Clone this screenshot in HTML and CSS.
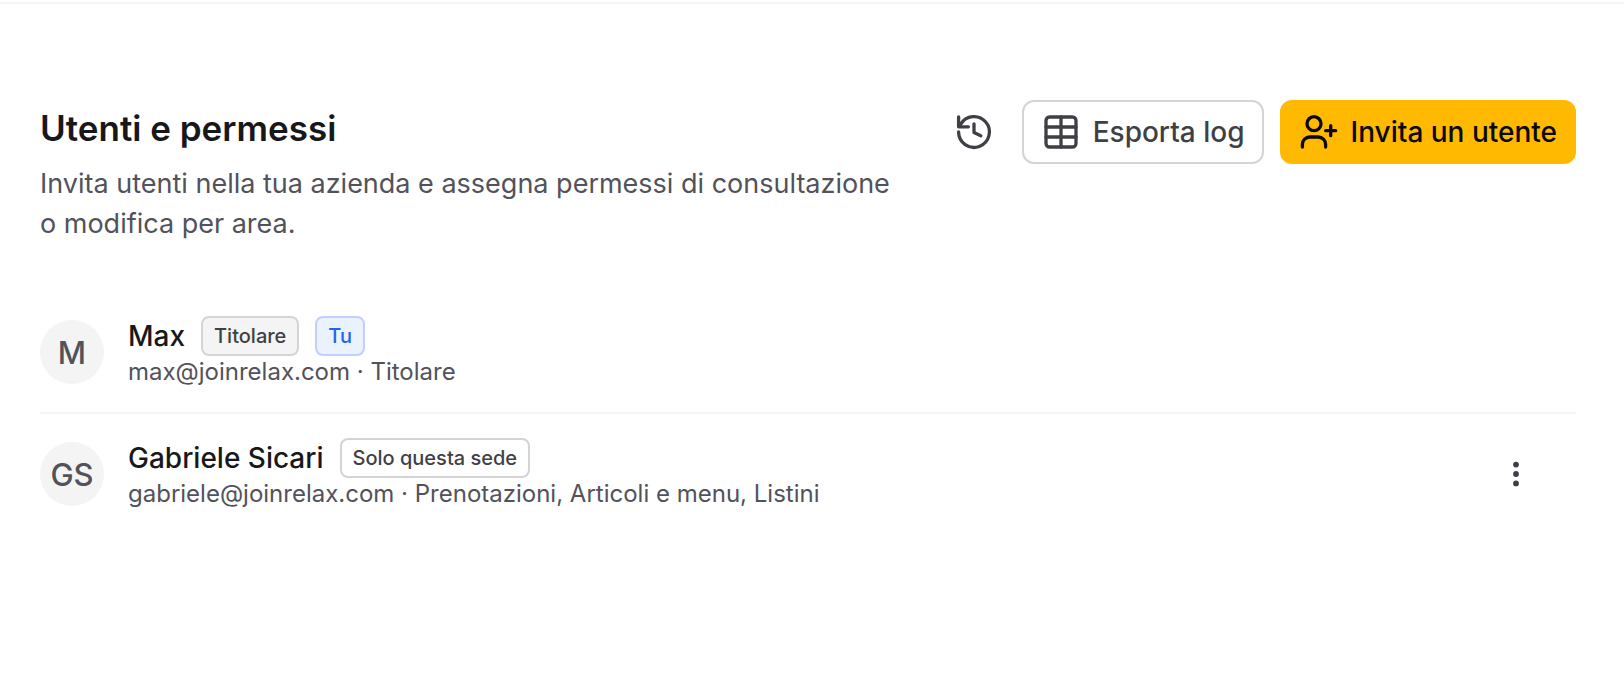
FILE: index.html
```html
<!DOCTYPE html>
<html lang="it">
<head>
<meta charset="utf-8">
<meta name="viewport" content="width=device-width, initial-scale=1">
<title>Utenti e permessi</title>
<link rel="stylesheet" href="styles.css">
</head>
<body>
<main class="page">
  <header class="header">
    <div class="intro">
      <h1 class="title">Utenti e permessi</h1>
      <p class="description">Invita utenti nella tua azienda e assegna permessi di consultazione o modifica per area.</p>
    </div>
    <div class="actions">
      <button class="icon-button" type="button" aria-label="Cronologia">
        <svg class="icon" viewBox="0 0 40 40" aria-hidden="true"><path d="M4.6 20A15.4 15.4 0 1 0 6.6 12.4L5 14.8M4.6 4.8v10h9.8M20 11.8v8.8l6.8 3.2"/></svg>
      </button>
      <button class="button button-outline" type="button">
        <svg class="icon" viewBox="0 0 40 40" aria-hidden="true"><rect x="5" y="5" width="30" height="30" rx="3.5"/><path d="M20 5v30M5 15h30M5 25h30"/></svg>
        Esporta log
      </button>
      <button class="button button-primary" type="button">
        <svg class="icon" viewBox="0 0 40 40" aria-hidden="true"><circle cx="15" cy="11.7" r="7"/><path d="M3.4 35v-2.6a7.4 7.4 0 0 1 7.4-7.4h8.4a7.4 7.4 0 0 1 7.4 7.4V35M31.7 13.7v10M26.7 18.7h10"/></svg>
        Invita un utente
      </button>
    </div>
  </header>
  <ul class="users">
    <li class="user">
      <span class="avatar" aria-hidden="true">M</span>
      <div class="details">
        <div class="name-row">
          <span class="name">Max</span>
          <span class="badge badge-filled">Titolare</span>
          <span class="badge badge-blue">Tu</span>
        </div>
        <div class="meta">max@joinrelax.com · Titolare</div>
      </div>
    </li>
    <li class="user">
      <span class="avatar" aria-hidden="true">GS</span>
      <div class="details">
        <div class="name-row">
          <span class="name">Gabriele Sicari</span>
          <span class="badge">Solo questa sede</span>
        </div>
        <div class="meta">gabriele@joinrelax.com · Prenotazioni, Articoli e menu, Listini</div>
      </div>
      <button class="icon-button" type="button" aria-label="Altre azioni">
        <svg class="icon icon-solid" viewBox="0 0 40 40" aria-hidden="true"><circle cx="20" cy="10.6" r="2.9"/><circle cx="20" cy="20" r="2.9"/><circle cx="20" cy="29.4" r="2.9"/></svg>
      </button>
    </li>
  </ul>
</main>
</body>
</html>
```
FILE: styles.css
```css
* {
  box-sizing: border-box;
}

body {
  margin: 2px 0 0;
  background: #fff;
  color: #18181b;
  font-family: Inter, "Liberation Sans", sans-serif;
}

.page {
  padding: 96px 48px 96px 40px;
  border-top: 2px solid #f4f4f5;
}

.header {
  display: flex;
  align-items: flex-start;
  gap: 32px;
}

.intro {
  flex: 1;
  min-width: 0;
  padding-top: 4px;
}

.title {
  margin: 0 0 12px;
  font-size: 35px;
  line-height: 48px;
  font-weight: 600;
}

.description {
  margin: 0;
  color: #52525b;
  font-size: 27px;
  line-height: 40px;
}

.actions {
  display: flex;
  gap: 16px;
}

.button,
.icon-button {
  display: flex;
  align-items: center;
  justify-content: center;
  height: 64px;
  border: 2px solid transparent;
  border-radius: 12px;
  background: transparent;
  color: #3f3f46;
  font-family: inherit;
  cursor: pointer;
}

.icon-button {
  width: 64px;
  padding: 0;
}

.button {
  gap: 12px;
  padding: 0 17px;
  font-size: 28px;
  font-weight: 500;
  white-space: nowrap;
}

.button-outline {
  border-color: #d4d4d8;
  background: #fff;
}

.button-primary {
  border-color: #ffb900;
  background: #ffb900;
  color: #09090b;
}

.icon {
  flex: none;
  width: 40px;
  height: 40px;
  fill: none;
  stroke: currentColor;
  stroke-width: 3.3;
  stroke-linecap: round;
  stroke-linejoin: round;
}

.icon-solid {
  fill: currentColor;
  stroke: none;
}

.users {
  margin: 48px 0 0;
  padding: 0;
  list-style: none;
}

.user {
  display: flex;
  align-items: center;
  gap: 24px;
  padding: 24px 28px 24px 0;
}

.user + .user {
  border-top: 2px solid #f4f4f5;
}

.avatar {
  display: flex;
  flex: none;
  align-items: center;
  justify-content: center;
  width: 64px;
  height: 64px;
  border-radius: 50%;
  background: #f4f4f5;
  color: #52525b;
  font-size: 31px;
  font-weight: 500;
}

.details {
  flex: 1;
  min-width: 0;
}

.name-row {
  display: flex;
  align-items: center;
  gap: 16px;
}

.name {
  font-size: 28px;
  line-height: 40px;
  font-weight: 500;
}

.badge {
  padding: 0 11px;
  border: 2px solid #d4d4d8;
  border-radius: 8px;
  color: #3f3f46;
  font-size: 20px;
  line-height: 36px;
  font-weight: 500;
}

.badge-filled {
  background: #f4f4f5;
}

.badge-blue {
  border-color: #bfd0fb;
  background: #ebf2ff;
  color: #2563eb;
}

.meta {
  color: #52525b;
  font-size: 24px;
  line-height: 32px;
}
```
